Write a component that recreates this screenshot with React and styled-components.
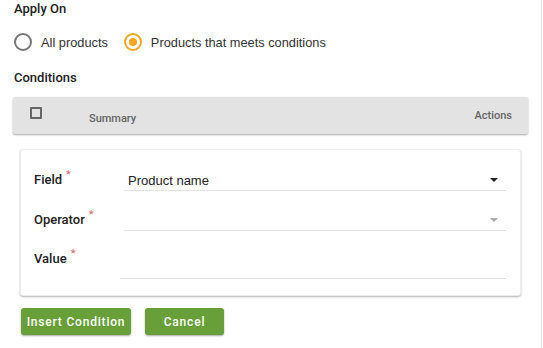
import React from 'react'
import styled, { createGlobalStyle } from 'styled-components'

const GlobalStyle = createGlobalStyle`
  html, body {
    margin: 0;
    padding: 0;
    background: #fff;
  }
  body {
    font-family: "Helvetica Neue", "Liberation Sans", Arial, sans-serif;
    color: #222;
  }
`;

const medium = `"Roboto", "Liberation Sans", Arial, sans-serif`;

const Page = styled.div`
  box-sizing: border-box;
  width: 542px;
  height: 348px;
  padding: 1px 0 0 13px;
  border-right: 1px solid #e4e4e4;
  overflow: hidden;
`;

const SectionTitle = styled.div`
  font-family: ${medium};
  font-size: 13px;
  line-height: 16px;
  font-weight: 500;
  color: #222;
  margin: ${p => p.$top || 0}px 0 0 1px;
`;

const RadioGroup = styled.div`
  display: flex;
  align-items: center;
  gap: 15px;
  margin-top: 16px;
  height: 18px;
`;

const RadioLabel = styled.label`
  display: flex;
  align-items: center;
  gap: 9px;
  font-size: 12.8px;
  color: #333;
  cursor: pointer;
`;

const RadioCircle = styled.span`
  box-sizing: border-box;
  width: 18px;
  height: 18px;
  border-radius: 50%;
  border: 2px solid ${p => (p.$checked ? '#f5a623' : '#777')};
  display: flex;
  align-items: center;
  justify-content: center;
  margin-left: 1px;

  &::after {
    content: '';
    width: 8px;
    height: 8px;
    border-radius: 50%;
    background: ${p => (p.$checked ? '#f5a623' : 'transparent')};
  }
`;

const TableHead = styled.div`
  box-sizing: border-box;
  width: 515px;
  height: 37px;
  margin-top: 11px;
  background: #e3e3e3;
  border-radius: 2px;
  box-shadow: 0 1px 2px rgba(0, 0, 0, 0.35);
  display: flex;
  align-items: flex-start;
  padding: 10px 16px 0 17px;
`;

const Checkbox = styled.span`
  box-sizing: border-box;
  width: 12px;
  height: 12px;
  border: 2px solid #666;
  border-radius: 1px;
  flex: none;
`;

const HeadCell = styled.div`
  font-family: ${medium};
  font-size: 11px;
  font-weight: 500;
  color: #666;
  margin-top: ${p => p.$top}px;
  margin-left: ${p => p.$left || 0}px;
  flex: ${p => (p.$grow ? 1 : 'none')};
`;

const Card = styled.div`
  box-sizing: border-box;
  width: 501px;
  margin: 15px 0 0 7px;
  padding: 20px 14px 16px 13px;
  background: #fff;
  border: 1px solid #eee;
  border-radius: 3px;
  box-shadow: 0 1px 2px rgba(0, 0, 0, 0.3);
`;

const FieldRow = styled.div`
  display: grid;
  grid-template-columns: 90px 1fr;
  align-items: start;
  margin-top: ${p => p.$top || 0}px;
`;

const Label = styled.div`
  font-family: ${medium};
  font-size: 13px;
  font-weight: 500;
  line-height: 20px;
  color: #222;
  margin-top: ${p => p.$top || 0}px;
`;

const Required = styled.span`
  color: #e06666;
  font-size: 11px;
  font-weight: 400;
  margin-left: 4px;
  position: relative;
  top: -6px;
`;

const Control = styled.div`
  box-sizing: content-box;
  height: ${p => p.$height || 20}px;
  border-bottom: 1px solid #e2e2e2;
  display: flex;
  align-items: center;
  justify-content: space-between;
  padding: 0 8px 0 4px;
  font-size: 13px;
  color: #222;
  margin-left: ${p => p.$shift || 0}px;
`;

const Caret = styled.span`
  width: 0;
  height: 0;
  border-left: 4px solid transparent;
  border-right: 4px solid transparent;
  border-top: 4px solid ${p => (p.$muted ? '#aaa' : '#222')};
`;

const Buttons = styled.div`
  display: flex;
  gap: 14px;
  margin: 12px 0 0 8px;
`;

const Button = styled.button`
  height: 27px;
  width: ${p => p.$width}px;
  padding: 0;
  border: none;
  border-radius: 3px;
  background: #689f38;
  box-shadow: 0 1px 2px rgba(0, 0, 0, 0.35);
  color: #fff;
  font-family: ${medium};
  font-size: 12px;
  font-weight: 500;
  letter-spacing: 0.8px;
  cursor: pointer;
`;

const App = () => {
  return (
    <Page>
      <GlobalStyle />
      <SectionTitle>Apply On</SectionTitle>
      <RadioGroup>
        <RadioLabel>
          <RadioCircle />
          All products
        </RadioLabel>
        <RadioLabel>
          <RadioCircle $checked />
          Products that meets conditions
        </RadioLabel>
      </RadioGroup>
      <SectionTitle $top={19}>Conditions</SectionTitle>
      <TableHead>
        <Checkbox />
        <HeadCell $top={5} $left={47} $grow>Summary</HeadCell>
        <HeadCell $top={2}>Actions</HeadCell>
      </TableHead>
      <Card>
        <FieldRow>
          <Label>Field<Required>*</Required></Label>
          <Control>
            Product name
            <Caret />
          </Control>
        </FieldRow>
        <FieldRow $top={19}>
          <Label>Operator<Required>*</Required></Label>
          <Control>
            <span />
            <Caret $muted />
          </Control>
        </FieldRow>
        <FieldRow $top={18}>
          <Label>Value<Required>*</Required></Label>
          <Control $height={29} $shift={-4} />
        </FieldRow>
      </Card>
      <Buttons>
        <Button $width={110}>Insert Condition</Button>
        <Button $width={79}>Cancel</Button>
      </Buttons>
    </Page>
  )
}

export default App
